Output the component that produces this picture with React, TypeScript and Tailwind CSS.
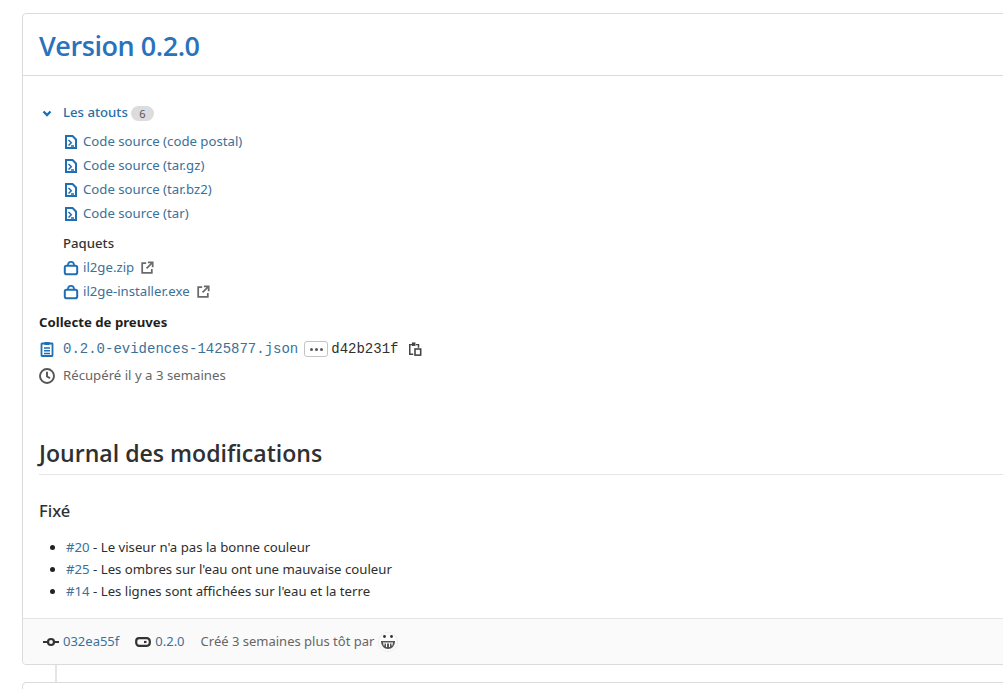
import type { ReactNode } from 'react'

const sourceLinks = ['Code source (code postal)', 'Code source (tar.gz)', 'Code source (tar.bz2)', 'Code source (tar)']
const packages = ['il2ge.zip', 'il2ge-installer.exe']
const fixes = [
  { id: '#20', text: "Le viseur n'a pas la bonne couleur" },
  { id: '#25', text: "Les ombres sur l'eau ont une mauvaise couleur" },
  { id: '#14', text: "Les lignes sont affichées sur l'eau et la terre" },
]

function Icon({ children, className }: { children: ReactNode; className: string }) {
  return (
    <svg viewBox="0 0 16 16" className={className} fill="none" stroke="currentColor" strokeWidth="2">
      {children}
    </svg>
  )
}

const DocCode = () => (
  <Icon className="w-4 h-4 text-[#1f6fb5] shrink-0">
    <path d="M3 2h6.500L13 5.500V14H3z" />
    <path d="M5.500 6l2.800 2.800-2.800 2.700" strokeWidth="1.500" />
    <path d="M8 12h3" strokeWidth="1.500" />
  </Icon>
)

const PackageIcon = () => (
  <Icon className="w-4 h-4 text-[#1f6fb5] shrink-0">
    <rect x="1.800" y="5.800" width="12.400" height="8.400" rx="1.800" />
    <path d="M4.800 5.500C5 3 6 1.800 8 1.800s3 1.200 3.200 3.700" strokeWidth="1.700" />
  </Icon>
)

const ExternalLink = () => (
  <Icon className="w-[14px] h-[14px] text-[#6a6a6a] shrink-0">
    <path d="M7 2.500H2.500v11h11V9" />
    <path d="M9 1.500h5.500V7M14 2L7.500 8.500" />
  </Icon>
)

export default function App() {
  return (
    <div className="h-[689px] w-[1003px] overflow-hidden bg-white pt-[13px] pl-[22px] font-['Noto_Sans',sans-serif] text-[13.2px] text-[#2e2e2e]">
      <div className="w-[1100px] rounded-[4px] border border-[#dbdbdb]">
        <div className="h-[62px] border-b border-[#dbdbdb] pl-4 pt-px flex items-center">
          <h1 className="text-[27px] font-semibold leading-none text-[#2a72bb] font-['Open_Sans',sans-serif] tracking-[-0.45px]">Version 0.2.0</h1>
        </div>

        <div className="pl-4 pt-[26px]">
          {/* Assets */}
          <div className="flex items-center h-[22px]">
            <svg viewBox="0 0 16 16" className="w-4 h-4 text-[#1f6fb5]" fill="none" stroke="currentColor" strokeWidth="2.400">
              <path d="M4.500 6.500l3.500 3.500 3.500-3.500" />
            </svg>
            <span className="ml-2 font-medium text-[#2a6ea8]">Les atouts</span>
            <span className="ml-[3px] h-[15px] w-[23px] rounded-full bg-[#dcdcde] text-[11px] leading-[15px] text-center text-[#555555]">6</span>
          </div>
          <ul className="ml-6 mt-[6px]">
            {sourceLinks.map(label => (
              <li key={label} className="flex items-center h-6 gap-[4px] text-[#3a7199]">
                <DocCode />
                <span>{label}</span>
              </li>
            ))}
          </ul>

          <div className="ml-6 mt-[6px] h-6 flex items-center font-medium text-[#333333]">Paquets</div>
          <ul className="ml-6">
            {packages.map(name => (
              <li key={name} className="flex items-center h-6 gap-[4px] text-[#3a7199]">
                <PackageIcon />
                <span>{name}</span>
                <span className="ml-[2px]"><ExternalLink /></span>
              </li>
            ))}
          </ul>

          {/* Evidence */}
          <div className="mt-[9px] h-5 flex items-center font-bold text-[#1f1f1f]">Collecte de preuves</div>
          <div className="mt-[4px] flex items-center h-6">
            <Icon className="w-4 h-4 text-[#1f6fb5] shrink-0">
              <rect x="2.500" y="2.500" width="11" height="12.500" rx="0.500" strokeWidth="1.800" />
              <rect x="5.500" y="1" width="5" height="3" fill="currentColor" stroke="none" />
              <path d="M5 7h6M5 9.800h6M5 12.500h6" strokeWidth="1.500" />
            </Icon>
            <span className="ml-2 font-['Liberation_Mono',monospace] text-[14px] text-[#3a7199]">0.2.0-evidences-1425877.json</span>
            <span className="ml-[6px] h-[16px] w-[24px] rounded-[3px] border border-[#c4c4c4] flex items-center justify-center gap-[2px]">
              <span className="w-[3px] h-[3px] rounded-full bg-[#555555]" />
              <span className="w-[3px] h-[3px] rounded-full bg-[#555555]" />
              <span className="w-[3px] h-[3px] rounded-full bg-[#555555]" />
            </span>
            <span className="ml-[3px] font-['Liberation_Mono',monospace] text-[14px] text-[#303030]">d42b231f</span>
            <Icon className="ml-[10px] w-[14px] h-4 text-[#444444] shrink-0">
              <path d="M6 14H2V3h3M9 3h3v3.500" strokeWidth="1.700" />
              <rect x="4.500" y="0.500" width="4" height="4" fill="currentColor" stroke="none" />
              <rect x="8" y="8" width="6.500" height="7" strokeWidth="1.800" />
            </Icon>
          </div>
          <div className="mt-[3px] flex items-center h-6 text-[#666666]">
            <svg viewBox="0 0 16 16" className="w-4 h-4 text-[#555555] shrink-0" fill="none" stroke="currentColor" strokeWidth="1.900">
              <circle cx="8" cy="8" r="7" />
              <path d="M8 3.800v4.700l3 1.700" />
            </svg>
            <span className="ml-2">Récupéré il y a 3 semaines</span>
          </div>

          {/* Changelog */}
          <h2 className="mt-[46px] h-[41px] w-[1100px] border-b border-[#e5e5e5] font-['Open_Sans',sans-serif] text-[23.100px] font-semibold leading-[38px] text-[#303030]">
            Journal des modifications
          </h2>
          <h3 className="mt-[22px] text-[16.500px] font-medium leading-[28px] text-[#303030]">Fixé</h3>
          <ul className="mt-[11px] ml-[27px] list-disc marker:text-[#222222]">
            {fixes.map(fix => (
              <li key={fix.id} className="h-[22px] leading-[22px]">
                <span className="text-[#3a7199]">{fix.id}</span> - {fix.text}
              </li>
            ))}
          </ul>
        </div>

        <div className="mt-[16px] h-[46px] rounded-b-[4px] border-t border-[#e5e5e5] bg-[#fafafa] flex items-center pl-5 text-[13px] text-[#666666]">
          <svg viewBox="0 0 16 16" className="w-4 h-4 text-[#333333] shrink-0" fill="none" stroke="currentColor" strokeWidth="2.200">
            <circle cx="8" cy="8" r="3" />
            <path d="M0 8h5M11 8h5" />
          </svg>
          <span className="ml-1 text-[#3a7199]">032ea55f</span>
          <svg viewBox="0 0 16 16" className="ml-4 w-4 h-4 text-[#333333] shrink-0" fill="none" stroke="currentColor" strokeWidth="2.200">
            <rect x="1.200" y="4.200" width="13.600" height="7.600" rx="3" />
            <path d="M9 8h2.500" />
          </svg>
          <span className="ml-1 text-[#3a7199]">0.2.0</span>
          <span className="ml-4">Créé 3 semaines plus tôt par</span>
          <svg viewBox="0 0 20 20" className="ml-1 w-5 h-5 shrink-0">
            <circle cx="10" cy="10" r="9.500" fill="#fbfbfb" stroke="#eeeeee" />
            <circle cx="6.500" cy="4.500" r="1.400" fill="#333333" />
            <circle cx="13.500" cy="4.500" r="1.400" fill="#333333" />
            <path d="M3 9h14c0 4.500-3 8-7 8S3 13.500 3 9z" fill="#555555" />
            <path d="M5 11h10M6 11v2.500M8.500 11v4M11.500 11v4M14 11v2.500" stroke="#ffffff" strokeWidth="1" />
          </svg>
        </div>
      </div>

      <div className="ml-[33px] h-[17px] w-[2px] bg-[#e5e5e5]" />
      <div className="w-[1100px] h-[40px] rounded-t-[4px] border border-[#dbdbdb]" />
    </div>
  )
}
